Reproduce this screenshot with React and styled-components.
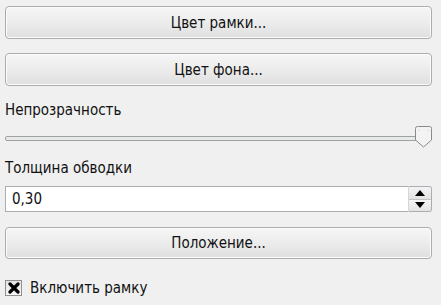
import React from 'react';
import styled, { createGlobalStyle } from 'styled-components';

const GlobalStyle = createGlobalStyle`
  html, body {
    margin: 0;
    padding: 0;
    background: #f0f0f0;
  }
  body {
    font-family: "DejaVu Sans Condensed", "DejaVu Sans", sans-serif;
    font-size: 15px;
    color: #000;
  }
`;

const Panel = styled.div`
  width: 441px;
  height: 305px;
  box-sizing: border-box;
  padding: 6px 9px 0 5px;
  display: flex;
  flex-direction: column;
`;

const Button = styled.button`
  height: ${(p) => p.$h || 33}px;
  width: 100%;
  margin-top: ${(p) => p.$mt || 0}px;
  box-sizing: border-box;
  border: 1px solid #acacac;
  border-radius: 4px;
  background: linear-gradient(#f6f6f6 0%, #ececec 50%, #dfdfdf 100%);
  box-shadow: inset 0 0 0 1px #fcfcfc;
  font: inherit;
  color: #111;
  padding: 0;
`;

const Label = styled.div`
  margin-top: ${(p) => p.$mt || 0}px;
  height: 18px;
  line-height: 18px;
  color: #111;
`;

const SliderTrack = styled.div`
  position: relative;
  margin-top: ${(p) => p.$mt || 0}px;
  height: 22px;
`;

const Groove = styled.div`
  position: absolute;
  left: 0;
  right: 2px;
  top: 10px;
  height: 5px;
  box-sizing: border-box;
  border: 1px solid #a0a0a0;
  border-radius: 2px;
  background: #e7eaea;
`;

const Handle = styled.svg`
  position: absolute;
  right: 0;
  top: 0;
`;

const SpinBox = styled.div`
  margin-top: ${(p) => p.$mt || 0}px;
  height: 26px;
  display: flex;
`;

const SpinInput = styled.div`
  flex: 1;
  box-sizing: border-box;
  border: 1px solid #abadb3;
  border-right: none;
  background: #fff;
  padding-left: 6px;
  display: flex;
  align-items: center;
  color: #111;
`;

const SpinButtons = styled.div`
  width: 24px;
  display: flex;
  flex-direction: column;
  box-sizing: border-box;
  border: 1px solid #abadb3;
  border-left: 1px solid #d6d6d6;
  border-radius: 0 3px 3px 0;
  overflow: hidden;
`;

const SpinBtn = styled.div`
  flex: 1;
  display: flex;
  align-items: center;
  justify-content: center;
  background: linear-gradient(#f4f4f4, #e3e3e3);
  border-top: ${(p) => (p.$down ? '1px solid #c4c4c4' : 'none')};
`;

const CheckRow = styled.div`
  margin-top: 20px;
  display: flex;
  align-items: center;
  gap: 8px;
  color: #111;
`;

const Box = styled.div`
  width: 17px;
  height: 16px;
  box-sizing: border-box;
  border: 1px solid #8f8f8f;
  background: linear-gradient(#e4e4e4, #f7f7f7);
  display: flex;
  align-items: center;
  justify-content: center;
`;

export default function App() {
  return (
    <>
      <GlobalStyle />
      <Panel>
        <Button>Цвет рамки...</Button>
        <Button $mt={14}>Цвет фона...</Button>
        <Label $mt={15}>Непрозрачность</Label>
        <SliderTrack $mt={7}>
          <Groove />
          <Handle width="17" height="22" viewBox="0 0 17 22">
            <path
              d="M2.5 0.5 H14.5 Q16.5 0.5 16.5 2.5 V14 L8.5 21 L0.5 14 V2.5 Q0.5 0.5 2.5 0.5 Z"
              fill="#f3f3f3"
              stroke="#8a8a8a"
            />
            <path d="M4 4 V5 M13 4 V5" stroke="#c8c8c8" />
          </Handle>
        </SliderTrack>
        <Label $mt={11}>Толщина обводки</Label>
        <SpinBox $mt={9}>
          <SpinInput>0,30</SpinInput>
          <SpinButtons>
            <SpinBtn>
              <svg width="10" height="6" viewBox="0 0 10 6">
                <path d="M0 6 L5 0 L10 6 Z" fill="#000" />
              </svg>
            </SpinBtn>
            <SpinBtn $down>
              <svg width="10" height="6" viewBox="0 0 10 6">
                <path d="M0 0 L5 6 L10 0 Z" fill="#000" />
              </svg>
            </SpinBtn>
          </SpinButtons>
        </SpinBox>
        <Button $mt={15} $h={32}>Положение...</Button>
        <CheckRow>
          <Box>
            <svg width="12" height="12" viewBox="0 0 12 12">
              <path d="M2 2 L10 10 M10 2 L2 10" stroke="#000" strokeWidth="3.2" strokeLinecap="round" />
            </svg>
          </Box>
          <span>Включить рамку</span>
        </CheckRow>
      </Panel>
    </>
  );
}
